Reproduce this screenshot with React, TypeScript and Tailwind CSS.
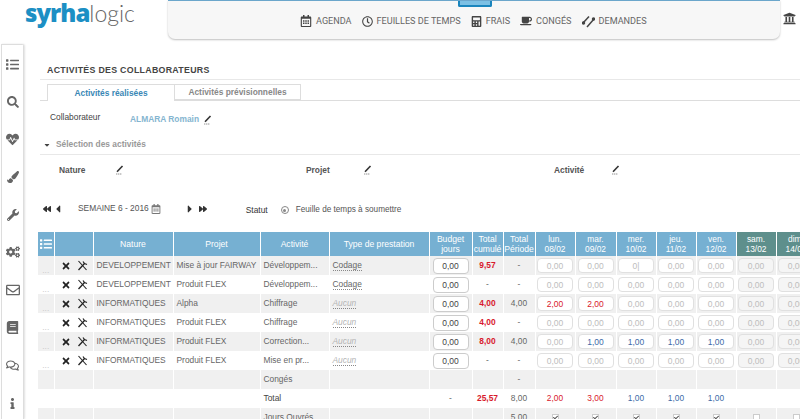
import { FaBackward, FaBook, FaCalculator, FaCaretLeft, FaCaretRight, FaCheck, FaCogs, FaCoffee, FaForward, FaHeartbeat, FaInfo, FaList, FaPaintBrush, FaRegCalendarAlt, FaRegClock, FaRegComments, FaRegEnvelope, FaSearch, FaTimes, FaUniversity, FaWrench, FaCaretDown } from "react-icons/fa"

type Row = {
    nature: string
    projet: string
    activite: string
    prestation: string
    cumul: string
    periode: string
    days: string[]
}

const E = "0,00"

const rows: Row[] = [
    { nature: "DEVELOPPEMENT", projet: "Mise à jour FAIRWAY", activite: "Développem...", prestation: "Codage", cumul: "9,57", periode: "-", days: [E, E, "0|", E, E, E, E] },
    { nature: "DEVELOPPEMENT", projet: "Produit FLEX", activite: "Développem...", prestation: "Codage", cumul: "-", periode: "-", days: [E, E, E, E, E, E, E] },
    { nature: "INFORMATIQUES", projet: "Alpha", activite: "Chiffrage", prestation: "Aucun", cumul: "4,00", periode: "4,00", days: ["2,00", "2,00", E, E, E, E, E] },
    { nature: "INFORMATIQUES", projet: "Produit FLEX", activite: "Chiffrage", prestation: "Aucun", cumul: "4,00", periode: "-", days: [E, E, E, E, E, E, E] },
    { nature: "INFORMATIQUES", projet: "Produit FLEX", activite: "Correction...", prestation: "Aucun", cumul: "8,00", periode: "4,00", days: [E, "1,00", "1,00", "1,00", "1,00", E, E] },
    { nature: "INFORMATIQUES", projet: "Produit FLEX", activite: "Mise en pr...", prestation: "Aucun", cumul: "-", periode: "-", days: [E, E, E, E, E, E, E] },
]

const dayHeads = [["lun.", "08/02"], ["mar.", "09/02"], ["mer.", "10/02"], ["jeu.", "11/02"], ["ven.", "12/02"], ["sam.", "13/02"], ["dim.", "14/02"]]
const totals = [["2,00", "text-[#d8192c]"], ["3,00", "text-[#d8192c]"], ["1,00", "text-[#3d6aa8]"], ["1,00", "text-[#3d6aa8]"], ["1,00", "text-[#3d6aa8]"]]

const navItems = [
    { label: "AGENDA", icon: <FaRegCalendarAlt size={12} /> },
    { label: "FEUILLES DE TEMPS", icon: <FaRegClock size={11} /> },
    { label: "FRAIS", icon: <FaCalculator size={11} /> },
    { label: "CONGÉS", icon: <FaCoffee size={12} /> },
    { label: "DEMANDES", icon: <DemandesIcon /> },
]

const sideIcons = [
    <FaList size={13} />, <FaSearch size={12} />, <FaHeartbeat size={13} />, <FaPaintBrush size={12} />, <FaWrench size={12} />,
    <FaCogs size={14} />, <FaRegEnvelope size={14} />, <FaBook size={13} />, <FaRegComments size={13} />, <FaInfo size={11} />,
]

function DemandesIcon() {
    return (
        <svg width="13" height="13" viewBox="0 0 13 13" fill="none" stroke="#444" strokeWidth="1.5">
            <path d="M1 8 L7 1.5" />
            <path d="M5 12 L12 4" />
            <circle cx="1.5" cy="8" r="1" fill="#444" />
            <circle cx="11.5" cy="4" r="1" fill="#444" />
        </svg>
    )
}

function EditIcon() {
    return (
        <svg width="9" height="10" viewBox="0 0 9 10" fill="none" className="shrink-0">
            <path d="M2 6.8 L7.5 1" stroke="#333" strokeWidth="1.6" />
            <path d="M1 9 H7" stroke="#777" strokeWidth="0.8" strokeDasharray="1.4 0.6" />
        </svg>
    )
}

function ToolsIcon() {
    return (
        <svg width="11" height="11" viewBox="0 0 11 11" fill="none" stroke="#222">
            <path d="M1.5 1 L9.5 10" strokeWidth="1.1" />
            <path d="M1.5 10 L7.5 3.5" strokeWidth="1.3" />
            <path d="M6 1.5 L7.5 3.5 L10 4.5" strokeWidth="1.2" />
        </svg>
    )
}

function dayColor(v: string) {
    if (v === "2,00") return "text-[#d8192c]"
    if (v === "1,00") return "text-[#3d6aa8]"
    return "text-[#bdbdbd]"
}

function DayInput({ value, weekend }: { value: string; weekend: boolean }) {
    return (
        <input
            readOnly
            value={value}
            className={`block mx-auto w-[36px] h-[15px] rounded-[4px] border border-[#e0e0e0] text-center text-[8.5px] outline-none ${weekend ? "bg-[#f5f5f5]" : "bg-white"} ${dayColor(value)}`}
        />
    )
}

const cell = "border-r border-white p-0 overflow-hidden whitespace-nowrap"
const head = "border-r border-white p-0 bg-[#76b0d2] text-white text-center font-normal text-[8.6px] leading-[10px]"

export default function App() {
    return (
        <div className="w-[800px] h-[419px] overflow-hidden bg-white font-['Liberation_Sans',sans-serif] text-[#666]">
            {/* header */}
            <div className="h-[44px] flex items-start">
                <div className="w-[168px] pl-[25px] flex items-baseline text-[#1c8fc4] leading-[25px]">
                    <span className="font-['Open_Sans',sans-serif] font-extrabold text-[24px] tracking-[-1px]">syrha</span>
                    <span className="font-['Lato',sans-serif] font-light text-[#666] text-[23px]">logic</span>
                </div>
                <div className="relative w-[612px] h-[39px] bg-[#f7f7f7] border-t border-[#6ba6cb] rounded-b-[7px] shadow-[0_1px_2px_rgba(0,0,0,0.25)] flex items-center pl-[132px] pt-[3px] gap-[10px] font-['Roboto',sans-serif] text-[9.1px] text-[#666]">
                    {navItems.map(n => (
                        <div key={n.label} className="flex items-center gap-[4px]">
                            <span className="text-[#444]">{n.icon}</span>
                            {n.label}
                        </div>
                    ))}
                    <div className="absolute left-[290px] top-0 w-[34px] h-[6px] bg-[#7cc0e4] border-2 border-t-0 border-[#1a85bd] rounded-b-[2px]" />
                </div>
                <div className="ml-[3px] pt-[12px] text-[#444]"><FaUniversity size={13} /></div>
            </div>

            <div className="flex h-[375px]">
                {/* sidebar */}
                <div className="w-[23px] ml-[1px] shrink-0 border-r border-l border-t border-[#ddd] shadow-[1px_0_2px_rgba(0,0,0,0.12)] rounded-tr-[2px] flex flex-col items-center pt-[11px] gap-[21.7px] text-[#666]">
                    {sideIcons.map((ic, i) => <div key={i} className="h-[16px] flex items-center">{ic}</div>)}
                </div>

                <div className="flex-1 min-w-0 pl-[14px] overflow-hidden">
                    <div className="h-[36px] flex items-end border-b border-[#e8e8e8] ml-[2px] pl-[7px] pb-[2px] font-bold text-[8.8px] tracking-[0.3px] text-[#444]">
                        ACTIVITÉS DES COLLABORATEURS
                    </div>
                    {/* tabs */}
                    <div className="mt-[4px] h-[17px] flex border-b border-[#ddd] ml-[2px] pl-[7px] text-[8.4px] font-bold">
                        <div className="w-[127px] h-[17px] bg-white border-t border-l border-[#ddd] text-[#3a87b5] flex items-center justify-center">Activités réalisées</div>
                        <div className="w-[127px] border border-[#ddd] text-[#888] flex items-center justify-center">Activités prévisionnelles</div>
                    </div>
                    <div className="h-[34px] flex items-center pl-[12px] text-[8.4px] text-[#444]">
                        <span className="w-[80px] pb-[1px]">Collaborateur</span>
                        <span className="text-[#84b5d0] font-bold mr-[4px] mt-[3px]">ALMARA Romain</span>
                        <span className="mt-[3px]"><EditIcon /></span>
                    </div>
                    <div className="h-[20px] flex items-center border-b border-[#e8e8e8] ml-[2px] pl-[3px] text-[8.4px] font-bold text-[#999]">
                        <FaCaretDown size={8} className="text-[#444] mr-[5px]" />
                        Sélection des activités
                    </div>
                    <div className="h-[30px] flex items-center pl-[21px] text-[8.4px] font-bold text-[#555]">
                        <span className="w-[56px]">Nature</span>
                        <span className="w-[191px]"><EditIcon /></span>
                        <span className="w-[57px]">Projet</span>
                        <span className="w-[191px]"><EditIcon /></span>
                        <span className="w-[57px]">Activité</span>
                        <EditIcon />
                    </div>
                    {/* week nav */}
                    <div className="h-[47px] flex items-center pl-[5px] text-[8.4px] text-[#555]">
                        <FaBackward size={8} className="text-[#333]" />
                        <FaCaretLeft size={12} className="text-[#333] ml-[1px]" />
                        <span className="ml-[14px]">SEMAINE 6 - 2016</span>
                        <FaRegCalendarAlt size={10} className="ml-[2px] text-[#777]" />
                        <FaCaretRight size={12} className="text-[#333] ml-[23px]" />
                        <FaForward size={8} className="text-[#333] ml-[3px]" />
                        <span className="ml-[39px] text-[#333] w-[35px] mt-[3px]">Statut</span>
                        <span className="w-[8px] h-[8px] rounded-full border border-[#888] flex items-center justify-center mt-[3px]">
                            <span className="w-[3px] h-[3px] rounded-full bg-[#888]" />
                        </span>
                        <span className="ml-[7px] mt-[3px] text-[8.2px]">Feuille de temps à soumettre</span>
                    </div>
                    {/* table */}
                    <table className="table-fixed border-collapse w-[778px] text-[8.4px]">
                        <colgroup>
                            <col className="w-[16px]" /><col className="w-[39px]" /><col className="w-[80px]" /><col className="w-[87px]" />
                            <col className="w-[69px]" /><col className="w-[100px]" /><col className="w-[43px]" /><col className="w-[31px]" /><col className="w-[32px]" />
                            <col className="w-[40px]" /><col className="w-[41px]" /><col className="w-[40px]" /><col className="w-[40px]" /><col className="w-[40px]" /><col className="w-[40px]" /><col className="w-[40px]" />
                        </colgroup>
                        <thead>
                            <tr className="h-[24px]">
                                <th className={head}><FaList size={12} className="mx-auto" /></th>
                                <th className={head}></th>
                                <th className={head}>Nature</th>
                                <th className={head}>Projet</th>
                                <th className={head}>Activité</th>
                                <th className={head}>Type de prestation</th>
                                <th className={head}>Budget<br />jours</th>
                                <th className={head}>Total<br />cumulé</th>
                                <th className={head}>Total<br />Période</th>
                                {dayHeads.map((d, i) => (
                                    <th key={d[1]} className={`border-r border-white p-0 text-white text-center font-normal text-[8.4px] leading-[10px] ${i > 4 ? "bg-[#5e8f8c]" : "bg-[#76b0d2]"}`}>{d[0]}<br />{d[1]}</th>
                                ))}
                            </tr>
                        </thead>
                        <tbody>
                            {rows.map((r, idx) => (
                                <tr key={idx} className={`h-[19px] ${idx % 2 === 0 ? "bg-[#f0f0f0]" : "bg-white"}`}>
                                    <td className={`${cell} text-center text-[#ccc] align-bottom leading-[10px]`}>...</td>
                                    <td className={cell}>
                                        <div className="flex items-center pl-[6px] gap-[6px] text-[#222]">
                                            <FaTimes size={10} />
                                            <ToolsIcon />
                                        </div>
                                    </td>
                                    <td className={`${cell} pl-[3px]`}>{r.nature}</td>
                                    <td className={`${cell} pl-[3px]`}>{r.projet}</td>
                                    <td className={`${cell} pl-[3px]`}>{r.activite}</td>
                                    <td className={`${cell} pl-[3px]`}>
                                        <span className={`border-b border-dotted border-[#888] ${r.prestation === "Aucun" ? "italic text-[#b5b5b5]" : ""}`}>{r.prestation}</span>
                                    </td>
                                    <td className={cell}>
                                        <input readOnly value="0,00" className="block mx-auto w-[36px] h-[16px] rounded-[4px] border border-[#ccc] bg-white text-center text-[8.5px] text-[#444] outline-none" />
                                    </td>
                                    <td className={`${cell} text-center ${r.cumul === "-" ? "" : "font-bold text-[#d8192c]"}`}>{r.cumul}</td>
                                    <td className={`${cell} text-center`}>{r.periode}</td>
                                    {r.days.map((d, i) => (
                                        <td key={i} className={cell}><DayInput value={d} weekend={i > 4} /></td>
                                    ))}
                                </tr>
                            ))}
                            <tr className="h-[19px] bg-[#f0f0f0]">
                                <td className={cell}></td><td className={cell}></td><td className={cell}></td><td className={cell}></td>
                                <td className={`${cell} pl-[3px]`}>Congés</td>
                                <td className={cell}></td><td className={cell}></td><td className={cell}></td>
                                <td className={`${cell} text-center`}>-</td>
                                {dayHeads.map(d => <td key={d[1]} className={cell}></td>)}
                            </tr>
                            <tr className="h-[19px]">
                                <td className={cell}></td><td className={cell}></td><td className={cell}></td><td className={cell}></td>
                                <td className={`${cell} pl-[3px] text-[#444]`}>Total</td>
                                <td className={cell}></td>
                                <td className={`${cell} text-center`}>-</td>
                                <td className={`${cell} text-center font-bold text-[#d8192c]`}>25,57</td>
                                <td className={`${cell} text-center`}>8,00</td>
                                {totals.map((t, i) => <td key={i} className={`${cell} text-center ${t[1]}`}>{t[0]}</td>)}
                                <td className={cell}></td><td className={cell}></td>
                            </tr>
                            <tr className="h-[19px] bg-[#f0f0f0]">
                                <td className={cell}></td><td className={cell}></td><td className={cell}></td><td className={cell}></td>
                                <td className={`${cell} pl-[3px]`}>Jours Ouvrés</td>
                                <td className={cell}></td><td className={cell}></td><td className={cell}></td>
                                <td className={`${cell} text-center`}>5,00</td>
                                {dayHeads.map((d, i) => (
                                    <td key={d[1]} className={cell}>
                                        <span className="mx-auto w-[7px] h-[7px] border border-[#ccc] bg-white flex items-center justify-center text-[#555]">
                                            {i < 5 && <FaCheck size={5} />}
                                        </span>
                                    </td>
                                ))}
                            </tr>
                        </tbody>
                    </table>
                </div>
            </div>
        </div>
    )
}
